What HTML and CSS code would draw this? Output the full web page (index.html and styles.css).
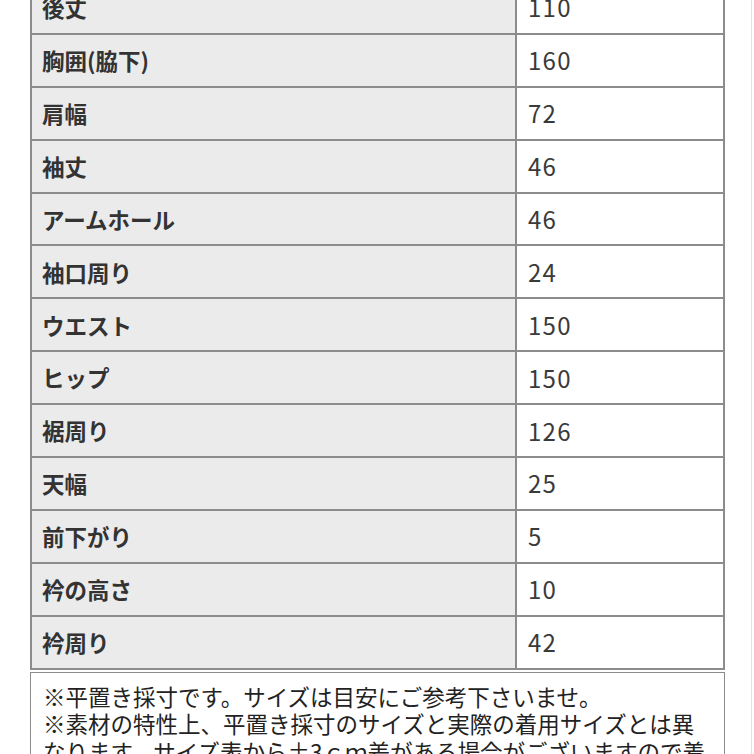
FILE: index.html
```html
<!DOCTYPE html>
<html lang="ja">
<head>
<meta charset="utf-8">
<title>サイズ表</title>
<link rel="stylesheet" href="styles.css">
</head>
<body>
<div class="page">
  <div class="sheet">
    <div class="table">
      <div class="label">後丈</div><div class="value">110</div>
      <div class="label">胸囲(脇下)</div><div class="value">160</div>
      <div class="label">肩幅</div><div class="value">72</div>
      <div class="label">袖丈</div><div class="value">46</div>
      <div class="label">アームホール</div><div class="value">46</div>
      <div class="label">袖口周り</div><div class="value">24</div>
      <div class="label">ウエスト</div><div class="value">150</div>
      <div class="label">ヒップ</div><div class="value">150</div>
      <div class="label">裾周り</div><div class="value">126</div>
      <div class="label">天幅</div><div class="value">25</div>
      <div class="label">前下がり</div><div class="value">5</div>
      <div class="label">衿の高さ</div><div class="value">10</div>
      <div class="label">衿周り</div><div class="value">42</div>
    </div>
    <div class="note">
      <p class="note-line">※平置き採寸です。サイズは目安にご参考下さいませ。</p>
      <p class="note-line">※素材の特性上、平置き採寸のサイズと実際の着用サイズとは異なります。サイズ表から±3ｃｍ差がある場合がございますので着用の際はご了承くださいませ。</p>
    </div>
  </div>
</div>
</body>
</html>
```

FILE: styles.css
```css
html, body {
  margin: 0;
  padding: 0;
  background: #ffffff;
}

body {
  font-family: "Noto Sans CJK JP", "Noto Sans", sans-serif;
  color: #333333;
}

.page {
  width: 752px;
  height: 754px;
  box-sizing: border-box;
  border-right: 1px solid #e2e2e2;
  padding-left: 30px;
  overflow: hidden;
}

.sheet {
  width: 695px;
  margin-top: -20px;
}

.table {
  display: grid;
  grid-template-columns: 485px 208px;
  border: 1px solid #8c8c8c;
}

.label,
.value {
  height: 52.9px;
  box-sizing: border-box;
  border: 1px solid #8c8c8c;
  display: flex;
  align-items: center;
  line-height: 1;
}

.label {
  background: #ebebeb;
  padding-left: 10px;
  font-size: 22.5px;
  font-weight: 700;
  color: #333333;
}

.value {
  background: #ffffff;
  padding-left: 11px;
  font-size: 24px;
  font-weight: 400;
  letter-spacing: 1.3px;
  color: #3a3a3a;
}

.note {
  margin-top: 2px;
  border: 1px solid #8c8c8c;
  padding: 10px 12px;
  font-size: 22.5px;
  line-height: 27.5px;
  color: #222222;
}

.note-line {
  margin: 0;
}
```
